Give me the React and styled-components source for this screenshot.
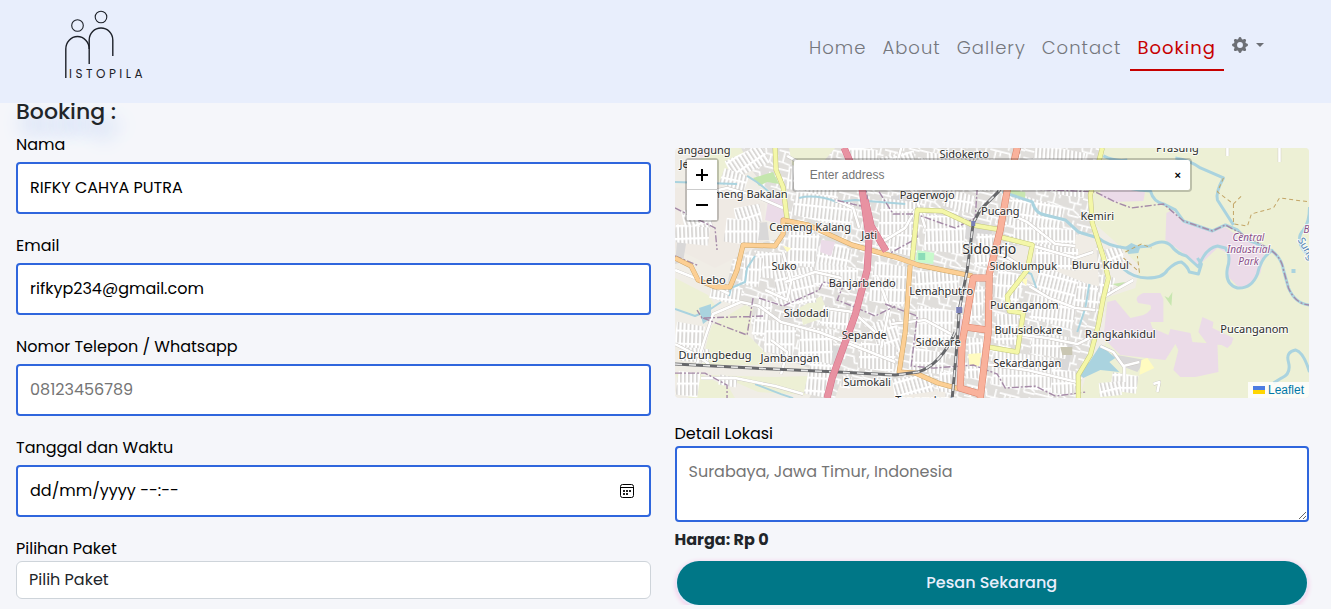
import React, { useState } from 'react';
import styled, { createGlobalStyle } from 'styled-components';

const GlobalStyle = createGlobalStyle`
  *, *::before, *::after {
    box-sizing: border-box;
  }

  body {
    margin: 0;
    background: #f5f6fa;
    color: #212529;
    font-family: Poppins, Inter, sans-serif;
    font-size: 16px;
    line-height: 24px;
  }

  input, textarea, select, button {
    font: inherit;
  }
`;

const Header = styled.header`
  position: fixed;
  top: 0;
  left: 0;
  right: 0;
  z-index: 10;
  display: flex;
  align-items: flex-start;
  justify-content: space-between;
  height: 103px;
  padding: 8px 59px 0 60px;
  background: #e8eefc;
`;

const Brand = styled.a`
  display: block;
`;

const LogoSvg = styled.svg`
  display: block;
  overflow: visible;
`;

const Nav = styled.nav`
  display: flex;
  align-items: flex-start;
  padding-top: 16px;
`;

const NavLink = styled.a`
  padding: 8px;
  height: 47px;
  border-bottom: 2px solid ${props => props.$active ? '#c70000' : 'transparent'};
  color: ${props => props.$active ? '#c70000' : '#75777d'};
  font-size: 18px;
  font-weight: ${props => props.$active ? 400 : 300};
  line-height: 32px;
  letter-spacing: 1px;
  text-decoration: none;
`;

const SettingsButton = styled.button`
  display: flex;
  align-items: center;
  gap: 8px;
  height: 42px;
  padding: 0 8px;
  border: 0;
  background: none;
  color: #6c6f75;
`;

const Main = styled.main`
  padding: 98px 22px 0 16px;
`;

const Title = styled.h1`
  margin: 0;
  font-size: 22px;
  font-weight: 500;
  line-height: 28px;
  text-shadow: 6px 12px 20px #a9c0f2;
`;

const Form = styled.form`
  display: grid;
  grid-template-columns: 1fr 1fr;
  gap: 24px;
  padding-top: 7px;
`;

const Column = styled.div`
  min-width: 0;
  padding-top: ${props => props.$top || 0}px;
`;

const Field = styled.div`
  display: flex;
  flex-direction: column;
  gap: ${props => props.$tight ? 0 : 5}px;
  margin-bottom: ${props => props.$tight ? 6 : 20}px;
  color: #000;
`;

const inputBase = `
  width: 100%;
  border: 2px solid #2f66dd;
  border-radius: 4px;
  background: #fff;
  color: #000;
  outline: none;
`;

const TextInput = styled.input`
  ${inputBase}
  height: 52px;
  padding: 0 12px 2px;

  &::placeholder {
    color: ${props => props.$dark ? '#000' : '#757575'};
    opacity: 1;
  }
`;

const DateWrapper = styled.div`
  position: relative;
`;

const CalendarButton = styled.button`
  position: absolute;
  top: 18px;
  right: 16px;
  width: 16px;
  height: 16px;
  padding: 0;
  border: 0;
  background: none;
  line-height: 0;
`;

const Select = styled.select`
  width: 100%;
  height: 38px;
  padding: 0 12px;
  border: 1px solid #ced4da;
  border-radius: 6px;
  background: #fff;
  color: #212529;
  appearance: none;
`;

const TextArea = styled.textarea`
  ${inputBase}
  display: block;
  height: 76px;
  padding: 12px;
  resize: vertical;

  &::placeholder {
    color: #757575;
    opacity: 1;
  }
`;

const Price = styled.p`
  margin: 0 0 9px;
  font-weight: 700;
`;

const SubmitRow = styled.div`
  display: flex;
  padding: 0 2px;
`;

const SubmitButton = styled.button`
  flex: 1;
  height: 44px;
  border: 0;
  border-radius: 22px;
  background: #007787;
  box-shadow: 0 1px 1px 1px #e4ebfa, 0 2px 4px 2px #f5cfea;
  color: #e8eefc;
  font-weight: 500;
`;

const MapBox = styled.div`
  position: relative;
  height: 250px;
  margin-bottom: 24px;
  border-radius: 4px;
  overflow: hidden;
  font-family: "Liberation Sans", Arial, sans-serif;
  font-size: 12px;
`;

const MapSvg = styled.svg`
  display: block;
  width: 100%;
  height: 100%;
`;

const ZoomControl = styled.div`
  position: absolute;
  top: 10px;
  left: 10px;
  display: flex;
  flex-direction: column;
  border: 2px solid rgba(0, 0, 0, 0.2);
  border-radius: 4px;
  background-clip: padding-box;
`;

const ZoomButton = styled.button`
  display: flex;
  align-items: center;
  justify-content: center;
  width: 30px;
  height: 30px;
  padding: 0;
  border: 0;
  background: #fff;

  &:first-child {
    border-bottom: 1px solid #ccc;
  }
`;

const SearchBox = styled.div`
  position: absolute;
  top: 10px;
  left: 50%;
  display: flex;
  width: 400px;
  height: 34px;
  margin-left: -200px;
  border: 2px solid rgba(0, 0, 0, 0.2);
  border-radius: 4px;
  background: #fff;
  background-clip: padding-box;
`;

const SearchInput = styled.input`
  flex: 1;
  min-width: 0;
  padding: 0 16px;
  border: 0;
  background: none;
  outline: none;
  font-size: 12px;

  &::placeholder {
    color: #757575;
    opacity: 1;
  }
`;

const ClearButton = styled.button`
  width: 24px;
  padding: 0;
  border: 0;
  background: none;
  color: #000;
  font-size: 11px;
  font-weight: 700;
`;

const Attribution = styled.div`
  position: absolute;
  right: 0;
  bottom: 0;
  padding: 0 5px;
  background: rgba(255, 255, 255, 0.8);
  line-height: 16px;

  a {
    display: flex;
    align-items: center;
    gap: 3px;
    color: #0078a8;
    text-decoration: none;
  }
`;

// blocks of narrow streets: x, y, width, height, rotation
const blocks = [
  [52, 4, 40, 20, -25], [112, 22, 52, 24, 12], [118, 48, 60, 26, 14], [60, 58, 26, 18, -10],
  [50, 72, 34, 24, 8], [8, 60, 28, 22, -12], [0, 78, 34, 18, 6], [46, 24, 26, 16, 20],
  [112, 84, 30, 34, 10], [80, 104, 26, 26, 5], [142, 96, 32, 26, 18], [100, 120, 40, 36, -4],
  [140, 118, 42, 22, 8], [68, 108, 18, 30, 10], [80, 152, 14, 36, 12], [90, 174, 30, 32, 8],
  [124, 180, 34, 34, 6], [146, 160, 28, 20, 12], [132, 214, 24, 34, 12], [0, 176, 28, 24, 10],
  [6, 200, 28, 14, 5], [36, 136, 30, 18, 15], [2, 224, 22, 24, 8], [44, 228, 18, 10, 10],
  [206, 6, 36, 30, -12], [250, 8, 68, 32, 6], [204, 52, 34, 40, 8], [250, 68, 40, 36, 6],
  [196, 116, 36, 40, 10], [200, 172, 24, 34, -10], [184, 196, 36, 26, 8], [240, 124, 44, 22, 4],
  [240, 160, 38, 38, 8], [234, 202, 36, 22, 10], [218, 228, 40, 18, -8], [300, 86, 18, 32, 5],
  [334, 52, 52, 32, 16], [338, 78, 62, 22, 8], [360, 98, 42, 22, 8], [358, 0, 50, 24, 12],
  [380, 24, 30, 24, 8], [320, 124, 26, 28, 12], [360, 126, 50, 26, 22], [356, 152, 44, 24, 14],
  [320, 166, 22, 30, 5], [318, 206, 60, 34, 8], [356, 186, 36, 22, 10], [400, 136, 24, 26, 14],
  [292, 138, 16, 34, 6], [292, 190, 14, 40, 5], [426, 100, 22, 16, -14], [436, 226, 26, 18, 8],
  [424, 234, 22, 14, -5], [376, 222, 24, 24, 6], [264, 224, 14, 20, 4], [166, 228, 10, 12, 10],
  [214, 84, 26, 22, 12], [270, 44, 28, 18, 16], [424, 128, 14, 18, 14], [172, 0, 30, 12, 8],
];

const farmland = [
  'M428 0H634V250H404L416 210L430 196L430 150L460 140L464 118L440 94L420 76L418 46Z',
  'M0 130L33 147L40 157L27 169L0 160Z',
  'M37 177L70 157L78 160L73 187L90 204V217L27 217L33 189Z',
  'M33 227L100 229L133 228L130 247L83 244L60 234Z',
  'M124 160L146 148L154 168L128 177Z',
  'M46 0H66L70 8L45 34L20 14Z',
  'M114 0H160L148 14L118 22Z',
  'M0 226L26 226L54 240L60 250H14Z',
  'M148 160L170 164L172 176L150 174Z',
];

const industrial = [
  'M491 65L497 62L507 74L537 84L550 79L565 90L590 100L585 125Q573 144 562 138L552 128V105L542 100L523 118L505 103L490 92Z',
  'M425 42H470L468 53L438 54L425 48Z',
  'M93 52L107 49L110 72L104 76L90 72Z',
  'M146 92L160 94L156 108L145 104Z',
  'M432 154L440 152L455 170L468 167Q478 162 475 157L463 155Q458 149 468 145H485L488 151V174H475L477 180L493 187L495 181L515 185L517 194L542 196L543 224L520 229L505 229L498 222L503 202L500 196L490 212L445 207L428 190Z',
  'M527 169L538 174L537 180L558 190L556 196L552 200L546 197L532 196L523 184Z',
  'M284 170L290 172L286 244L281 244Z',
  'M18 0H44L26 10Z',
];

const water = [
  'M425 197L440 210L434 214L444 224L425 222L408 230L402 224L414 214Z',
  'M450 99L456 95L465 99L463 105L453 106Z',
  'M24 160L36 156L36 170L28 176Z',
];

const grey = [
  'M274 64L318 80L314 96L270 86Z', 'M128 80L146 90L140 112L118 106Z', 'M216 48L236 46L232 70L214 66Z',
  'M386 190L398 194L392 226L384 220Z', 'M152 196L166 200L158 226L150 222Z', 'M74 76L92 74L94 92L78 92Z',
  'M436 206L470 212L462 224L446 218Z', 'M150 44L174 60L168 68L152 58Z', 'M2 94L12 90L8 114L0 116Z',
];

const rivers = [
  'M428 8Q440 14 452 12M500 10Q514 12 525 20L548 30Q540 44 542 52L558 77',
  'M327 44L357 54Q360 66 370 67L390 72L403 84L423 90Q432 98 450 100L474 98Q488 90 496 98Q502 106 511 108L523 119Q530 100 542 98L550 100Q556 108 552 120Q549 136 562 140Q576 141 582 126Q586 108 598 102',
  'M440 34Q452 42 475 43Q478 54 488 56L500 62L508 73L537 83L550 77L562 82L572 92L592 100Q606 108 608 122L613 140Q620 156 634 157',
  'M447 120Q458 130 472 130Q488 130 492 122Q500 114 506 114Q512 118 514 124L523 126L526 116L522 110',
  'M634 224Q628 204 620 202Q610 204 613 214Q616 226 606 230L598 235',
  'M634 59Q634 74 628 82Q620 90 628 102L634 109',
];

const streams = [
  'M0 34L62 36M72 28Q86 36 96 46M124 50Q140 46 162 54L180 52L230 56',
  'M80 108L72 120L70 134L56 140L54 148',
  'M0 161L20 168L34 162L46 154',
  'M414 136L410 160L402 184',
  'M346 122L356 126L361 140',
  'M80 236L106 246L118 250',
];

const boundaries = [
  'M0 60L40 80L42 102M0 108L24 118M88 168L27 170L22 162M78 150L72 187L28 170M84 150L108 158L144 142L148 134L168 138L162 152L182 160L200 168L220 158',
  'M0 225L30 225L52 237V250',
  'M170 0L190 36L194 60L160 52M204 44L218 66L240 66L242 90L210 108',
  'M210 156L242 168L236 218L258 220L298 217L322 226L330 240L360 238L380 248L410 244',
  'M302 40L300 70L280 80L240 66M330 40L420 44L440 54L456 60L488 56L508 73L537 83L550 77L592 100Q606 108 608 122L613 140Q620 156 634 157',
  'M160 14L220 16',
];

const tracks = [
  'M548 30L542 44L558 56L566 48M558 56L558 76L572 78L576 66L598 60L604 50L634 54',
  'M450 104L466 96L476 100M448 110L464 124L462 108',
];

const lanes = [
  'M0 122L30 134L54 146M22 216L30 190L38 166L66 154L84 158L106 174L144 184L170 194L220 214',
  'M0 196L20 206L34 216M26 230L60 230L100 238L128 246',
  'M26 46L52 40L80 48L108 60M112 8L134 20L168 20',
  'M160 52L178 60L184 80M214 20L240 46L250 80M204 96L230 80L240 62',
  'M150 160L178 164L200 184M216 176L250 172L276 186M202 128L214 160L206 200',
  'M300 100L330 108L346 118M330 64L352 74L380 96L400 98M358 98L400 110L418 104',
  'M354 138L374 150L400 160L420 162M340 186L372 190L402 196L414 190M310 216L352 222L402 234',
  'M427 150L440 142L458 132M425 198L438 204L448 218L464 214M449 218V234',
  'M552 0V8M604 0V14M478 236L484 234L482 244',
  'M90 142L112 152L116 134L108 104M110 134L140 124L166 130',
  'M356 28L380 34L410 30M246 10L266 40M226 0L216 38M96 192L112 204L106 226',
];

const yellowRoads = [
  'M100 0L101 22L108 39L112 72',
  'M237 112L242 62L267 63L297 77L327 82',
  'M325 89L357 97L352 122L332 148L334 163L348 165L342 204L313 199',
  'M427 0L415 47L417 75L428 109L433 130L428 150L423 177L415 207L403 227V250',
];

const orangeRoads = [
  'M0 110L16 118L23 132L40 139H55L62 122L68 97L100 98L108 86V72L133 77L177 97L220 109L243 117L297 128',
  'M235 117L230 184L224 224L240 225L263 235L285 241',
];

const redRoads = [
  'M342 0L332 42L325 82L314 126L313 184L305 250',
  'M314 130H298L290 177L287 194L285 240L305 246',
  'M290 179L312 182',
];

const tollRoads = [
  'M169 0L187 42L194 89L192 122L180 167L157 230L152 250',
  'M190 52L196 78L211 103',
];

const railways = [
  'M344 0L338 22L323 44L305 62L298 75L292 122L284 162L282 194L277 250',
  'M0 216L77 220L163 224L220 227L243 224Q266 216 280 184',
];

const places = [
  ['angagung', 29, 6], ['Je', 9, 20], ['Cemeng Bakalan', 69, 50], ['Cemeng Kalang', 135, 83],
  ['Jati', 194, 91], ['Suko', 109, 122], ['Lebo', 38, 136], ['Banjarbendo', 187, 139],
  ['Sidodadi', 131, 169], ['Sepande', 189, 191], ['Durungbedug', 40, 211], ['Jambangan', 115, 214],
  ['Sumokali', 192, 238], ['Sidokerto', 289, 10], ['Pagerwojo', 252, 51], ['Pucang', 325, 67],
  ['Kemiri', 422, 72], ['Sidoklumpuk', 348, 122], ['Bluru Kidul', 425, 121], ['Lemahputro', 266, 147],
  ['Pucanganom', 349, 161], ['Bulusidokare', 353, 186], ['Sidokare', 263, 198], ['Sekardangan', 352, 219],
  ['Rangkahkidul', 445, 190], ['Pucanganom', 579, 185], ['Prasung', 502, 4], ['Tenggulunan', 254, 256],
];

const Shapes = ({ items, ...rest }) => (
  <g {...rest}>
    {items.map(d => <path key={d} d={d} />)}
  </g>
);

const Roads = ({ items, casing, color, width }) => (
  <>
    <Shapes items={items} fill="none" stroke={casing} strokeWidth={width + 1} strokeLinejoin="round" />
    <Shapes items={items} fill="none" stroke={color} strokeWidth={width} strokeLinejoin="round" />
  </>
);

function StreetMap() {
  return (
    <MapSvg viewBox="0 0 634 250" preserveAspectRatio="xMidYMid slice" role="img" aria-label="Sidoarjo">
      <defs>
        <pattern id="streets" width="13" height="4" patternUnits="userSpaceOnUse" patternTransform="rotate(82)">
          <rect width="13" height="4" fill="#d9d7d5" />
          <path d="M0 1H13M1 0V4" stroke="#fff" strokeWidth="2.3" />
        </pattern>
        <pattern id="alleys" width="34" height="26" patternUnits="userSpaceOnUse" patternTransform="rotate(14)">
          <rect width="34" height="26" fill="#e0dedb" />
          <path d="M0 3H20L22 9H34M6 3V14H0M6 14L18 16V26M18 16H27V9M27 16L34 20M0 21H18M11 3V8M14 21V15M23 22V16M23 22H34M30 0V9" stroke="#fff" strokeWidth="1.6" fill="none" />
        </pattern>
      </defs>
      <rect width="634" height="250" fill="#f0ede6" />
      <path d="M60 0H426L416 60L428 110L424 180L400 250H134L150 226L80 200L74 160L50 146L60 100L108 90L90 40Z" fill="url(#alleys)" />
      <path d="M0 40L40 36L90 56L88 96L40 120L0 100Z" fill="#efeae4" />
      <path d="M330 100L420 84L424 140L390 160L350 130ZM166 232L222 232L270 244V250H160Z" fill="#f0ece5" />
      <Shapes items={farmland} fill="#edf0d5" />
      <Shapes items={grey} fill="#d9d8d8" />
      {blocks.map(([x, y, w, h, r]) => (
        <rect key={`${x}-${y}`} x={x} y={y} width={w} height={h} fill="url(#streets)" transform={`rotate(${r} ${x + w / 2} ${y + h / 2})`} />
      ))}
      <Shapes items={industrial} fill="#ebdbe8" />
      <path d="M78 30L98 24L104 36L92 34L84 38Z" fill="#c4e6ad" />
      <path d="M242 102L259 105L258 116L240 114Z" fill="#c8facc" />
      <path d="M243 105H250V112H243Z" fill="#8bdcb8" />
      <path d="M334 42L350 44V50L336 48ZM437 136L450 134L444 139ZM489 148L493 150L497 144L496 158Z" fill="#c8e6b0" />
      <path d="M466 212L472 210L479 220L464 227ZM293 206L306 205L304 218L294 217ZM346 132L352 130L351 138ZM108 98L116 100L112 104Z" fill="#fffbc0" />
      <path d="M385 199H397V207H387Z" fill="#c9c6b3" />
      <Shapes items={water} fill="#aad3df" />
      <path d="M616 121H620V125H616Z" fill="#aad3df" />
      <Shapes items={rivers} fill="none" stroke="#aad3df" strokeWidth="3" strokeLinejoin="round" />
      <Shapes items={streams} fill="none" stroke="#aad3df" strokeWidth="2" strokeLinejoin="round" />
      <Shapes items={tracks} fill="none" stroke="#c3a566" strokeWidth="1" strokeDasharray="4 3" />
      <Shapes items={lanes} fill="none" stroke="#c9c5c1" strokeWidth="3.4" strokeLinejoin="round" />
      <Shapes items={lanes} fill="none" stroke="#fff" strokeWidth="2.6" strokeLinejoin="round" />
      <Shapes items={boundaries} fill="none" stroke="#a58aa8" strokeWidth="1.4" strokeDasharray="7 2 2 2" />
      <Roads items={yellowRoads} casing="#c3c77c" color="#f4f7a8" width={4} />
      <Roads items={orangeRoads} casing="#cda566" color="#fccf94" width={4} />
      <Shapes items={railways} fill="none" stroke="#66676a" strokeWidth="3" />
      <Shapes items={railways} fill="none" stroke="#e6e6e6" strokeWidth="1.6" strokeDasharray="7 7" />
      <Roads items={redRoads} casing="#d98068" color="#f9b29c" width={6} />
      <Roads items={tollRoads} casing="#d5708a" color="#e892a2" width={6} />
      <path d="M281 159H287V165H281ZM296 73H300V78H296Z" fill="#7a80b8" />
      <g fontFamily="Noto Sans, sans-serif" fontSize="11" fill="#2d2d2d" stroke="#fff" strokeOpacity="0.75" strokeWidth="2" paintOrder="stroke" strokeLinejoin="round" textAnchor="middle">
        {places.map(([name, x, y]) => <text key={`${name}-${x}`} x={x} y={y}>{name}</text>)}
        <text x="314" y="106" fontSize="14">Sidoarjo</text>
        <g fill="#8a4f88" fontSize="10" fontStyle="italic">
          <text x="573" y="93">Central</text>
          <text x="573" y="105">Industrial</text>
          <text x="573" y="117">Park</text>
        </g>
        <text x="631" y="85" fill="#8a4f88" fontSize="10" fontStyle="italic">B</text>
        <text x="622" y="92" fill="#4d80b3" fontSize="10" textAnchor="start" transform="rotate(60 622 92)">Sungai</text>
      </g>
    </MapSvg>
  );
}

const Logo = () => (
  <LogoSvg width="90" height="74" viewBox="60 8 90 74" fill="none" stroke="#1d2129" strokeWidth="1.4" role="img" aria-label="Mistopila">
    <circle cx="77.5" cy="25.5" r="5.8" strokeWidth="1.1" />
    <circle cx="101" cy="17" r="5.8" strokeWidth="1.1" />
    <path d="M65.8 78V49A11.7 12.5 0 0 1 89.2 49" />
    <path d="M89.2 64V40A11.8 12 0 0 1 112.8 40V56" />
    <text x="69" y="78" fill="#1d2129" stroke="none" fontFamily="Poppins, Inter, sans-serif" fontSize="12" letterSpacing="3.5">ISTOPILA</text>
  </LogoSvg>
);

const GearIcon = () => (
  <svg width="16" height="16" viewBox="0 0 16 16" fill="currentColor" aria-hidden="true">
    <path d="M9.405 1.05c-.413-1.4-2.397-1.4-2.81 0l-.1.34a1.464 1.464 0 0 1-2.105.872l-.31-.17c-1.283-.698-2.686.705-1.987 1.987l.169.311c.446.82.023 1.841-.872 2.105l-.34.1c-1.4.413-1.4 2.397 0 2.81l.34.1a1.464 1.464 0 0 1 .872 2.105l-.17.31c-.698 1.283.705 2.686 1.987 1.987l.311-.169a1.464 1.464 0 0 1 2.105.872l.1.34c.413 1.4 2.397 1.4 2.81 0l.1-.34a1.464 1.464 0 0 1 2.105-.872l.31.17c1.283.698 2.686-.705 1.987-1.987l-.169-.311a1.464 1.464 0 0 1 .872-2.105l.34-.1c1.4-.413 1.4-2.397 0-2.81l-.34-.1a1.464 1.464 0 0 1-.872-2.105l.17-.31c.698-1.283-.705-2.686-1.987-1.987l-.311.169a1.464 1.464 0 0 1-2.105-.872l-.1-.34zM8 10.93a2.929 2.929 0 1 1 0-5.86 2.929 2.929 0 0 1 0 5.858z" />
  </svg>
);

const CalendarIcon = () => (
  <svg width="16" height="16" viewBox="0 0 16 16" fill="none" stroke="#000" aria-hidden="true">
    <rect x="1.5" y="1.5" width="13" height="13" rx="2" />
    <path d="M2 4.5H14" />
    <path d="M4 7H6V9H4ZM7 7H9V9H7ZM10 7H12V9H10ZM4 10H6V12H4ZM7 10H9V12H7Z" fill="#222" stroke="none" />
  </svg>
);

const links = ['Home', 'About', 'Gallery', 'Contact', 'Booking'];

function App() {
  const [nama, setNama] = useState('RIFKY CAHYA PUTRA');
  const [email, setEmail] = useState('rifkyp234@gmail.com');

  return (
    <>
      <GlobalStyle />
      <Header>
        <Brand href="#home"><Logo /></Brand>
        <Nav>
          {links.map(link => (
            <NavLink key={link} href={`#${link.toLowerCase()}`} $active={link === 'Booking'}>{link}</NavLink>
          ))}
          <SettingsButton type="button" aria-label="Settings">
            <GearIcon />
            <svg width="8" height="4" viewBox="0 0 8 4" fill="currentColor" aria-hidden="true">
              <path d="M0 0H8L4 4Z" />
            </svg>
          </SettingsButton>
        </Nav>
      </Header>

      <Main>
        <Title>Booking :</Title>
        <Form onSubmit={(e) => e.preventDefault()}>
          <Column>
            <Field>
              <label htmlFor="nama">Nama</label>
              <TextInput id="nama" value={nama} onChange={(e) => setNama(e.target.value)} />
            </Field>
            <Field>
              <label htmlFor="email">Email</label>
              <TextInput id="email" type="email" value={email} onChange={(e) => setEmail(e.target.value)} />
            </Field>
            <Field>
              <label htmlFor="telepon">Nomor Telepon / Whatsapp</label>
              <TextInput id="telepon" type="tel" placeholder="08123456789" />
            </Field>
            <Field>
              <label htmlFor="tanggal">Tanggal dan Waktu</label>
              <DateWrapper>
                <TextInput id="tanggal" placeholder="dd/mm/yyyy --:--" $dark />
                <CalendarButton type="button" aria-label="Pilih tanggal"><CalendarIcon /></CalendarButton>
              </DateWrapper>
            </Field>
            <Field $tight>
              <label htmlFor="paket">Pilihan Paket</label>
              <Select id="paket">
                <option>Pilih Paket</option>
              </Select>
            </Field>
          </Column>

          <Column $top={15}>
            <MapBox>
              <StreetMap />
              <ZoomControl>
                <ZoomButton type="button" aria-label="Zoom in">
                  <svg width="14" height="14" viewBox="0 0 14 14"><path d="M1 7H13M7 1V13" stroke="#000" strokeWidth="2" /></svg>
                </ZoomButton>
                <ZoomButton type="button" aria-label="Zoom out">
                  <svg width="14" height="14" viewBox="0 0 14 14"><path d="M1 7H13" stroke="#000" strokeWidth="2" /></svg>
                </ZoomButton>
              </ZoomControl>
              <SearchBox>
                <SearchInput type="text" aria-label="Enter address" placeholder="Enter address" />
                <ClearButton type="button" aria-label="Clear">×</ClearButton>
              </SearchBox>
              <Attribution>
                <a href="#leaflet">
                  <svg width="12" height="8" viewBox="0 0 12 8" aria-hidden="true">
                    <path fill="#4C7BE1" d="M0 0h12v4H0z" />
                    <path fill="#FFD500" d="M0 4h12v4H0z" />
                  </svg>
                  Leaflet
                </a>
              </Attribution>
            </MapBox>
            <Field $tight>
              <label htmlFor="lokasi">Detail Lokasi</label>
              <TextArea id="lokasi" placeholder="Surabaya, Jawa Timur, Indonesia" />
            </Field>
            <Price>Harga: Rp 0</Price>
            <SubmitRow>
              <SubmitButton type="submit">Pesan Sekarang</SubmitButton>
            </SubmitRow>
          </Column>
        </Form>
      </Main>
    </>
  );
}

export default App;
